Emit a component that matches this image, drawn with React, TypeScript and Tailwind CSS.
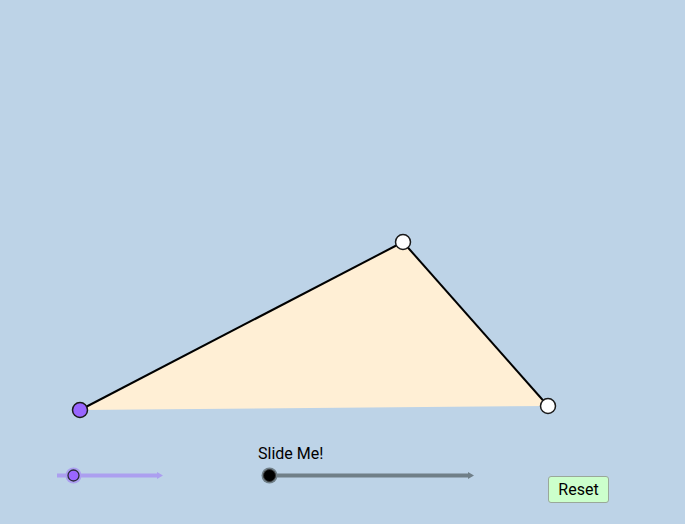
import React from 'react';

// Applet canvas: a draggable-looking triangle and two sliders
export default function App() {
  const A = { x: 80, y: 410 };
  const B = { x: 403, y: 242 };
  const C = { x: 548, y: 406 };

  return (
    <div className="relative w-[685px] h-[524px] bg-[#bdd3e7] overflow-hidden" style={{ fontFamily: 'Roboto, "Liberation Sans", sans-serif' }}>
      <svg className="absolute inset-0" width="685" height="524" viewBox="0 0 685 524">
        <polygon points={`${A.x},${A.y} ${B.x},${B.y} ${C.x},${C.y}`} fill="#ffefd5" />
        <line x1={A.x} y1={A.y} x2={B.x} y2={B.y} stroke="#000" strokeWidth="2" />
        <line x1={B.x} y1={B.y} x2={C.x} y2={C.y} stroke="#000" strokeWidth="2" />
        <circle cx={A.x} cy={A.y} r="7.5" fill="#9966ff" stroke="#1a1a1a" strokeWidth="1.5" />
        <circle cx={B.x} cy={B.y} r="7.5" fill="#fff" stroke="#1a1a1a" strokeWidth="1.5" />
        <circle cx={C.x} cy={C.y} r="7.5" fill="#fff" stroke="#1a1a1a" strokeWidth="1.5" />

        {/* slider 1 */}
        <line x1="57" y1="475.5" x2="158" y2="475.5" stroke="#ac9ff0" strokeWidth="4" />
        <polygon points="157,472 163,475.5 157,479" fill="#ac9ff0" />
        <circle cx="73.5" cy="475.5" r="8" fill="#ac9ff0" />
        <circle cx="73.5" cy="475.5" r="5.5" fill="#9966ff" stroke="#2a2a3a" strokeWidth="1.3" />

        {/* slider 2 */}
        <line x1="265" y1="475.5" x2="469" y2="475.5" stroke="#707f88" strokeWidth="4" />
        <polygon points="468,472 474,475.5 468,479" fill="#707f88" />
        <circle cx="269.5" cy="475.5" r="8" fill="#707f88" />
        <circle cx="269.5" cy="475.5" r="6" fill="#000" stroke="#333" strokeWidth="1" />
      </svg>

      <div className="absolute left-[258px] top-[444px] text-[16px] leading-[20px] text-black">Slide Me!</div>

      <button className="absolute left-[548px] top-[476px] w-[61px] h-[27px] bg-[#ccffcc] border border-[#9aa89a] rounded-[3px] text-[16px] leading-[20px] text-black flex items-center justify-center">
        Reset
      </button>
    </div>
  );
}
